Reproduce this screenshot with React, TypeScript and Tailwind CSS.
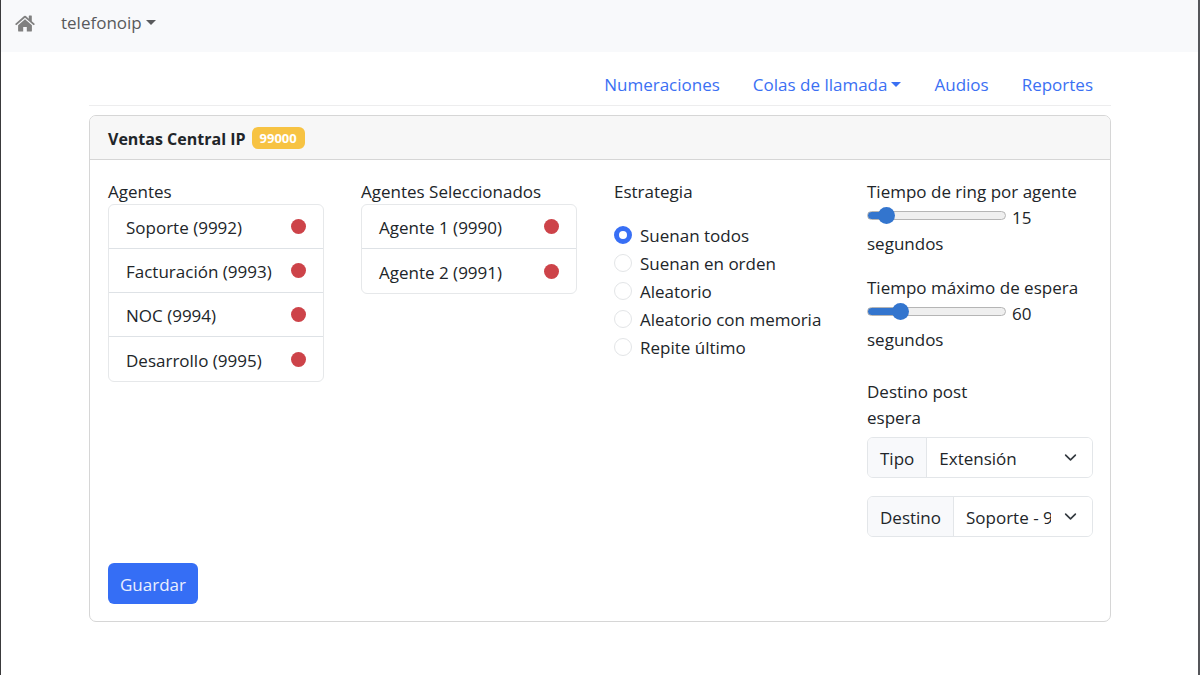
import { useState } from 'react';

type Agent = { name: string; ext: number };

const available: Agent[] = [
  { name: 'Soporte', ext: 9992 },
  { name: 'Facturación', ext: 9993 },
  { name: 'NOC', ext: 9994 },
  { name: 'Desarrollo', ext: 9995 },
];

const selected: Agent[] = [
  { name: 'Agente 1', ext: 9990 },
  { name: 'Agente 2', ext: 9991 },
];

const strategies = ['Suenan todos', 'Suenan en orden', 'Aleatorio', 'Aleatorio con memoria', 'Repite último'];

function Caret() {
  return (
    <svg viewBox="0 0 10 5" className="mb-[2px] h-[5px] w-[10px] fill-current" aria-hidden="true">
      <path d="M0 0h10L5 5z" />
    </svg>
  );
}

function HomeIcon() {
  return (
    <svg viewBox="0 0 20 17" className="h-[17px] w-[20px]" fill="#808080" aria-hidden="true">
      <path d="M9.1 1.1a1.35 1.35 0 0 1 1.8 0l2.9 2.6V1.1c0-.3.2-.5.5-.5h2c.3 0 .5.2.5.5v5.2l2.8 2.5c.2.2.2.5 0 .7l-.5.5c-.2.2-.5.2-.7 0L10 2.7 1.6 10c-.2.2-.5.2-.7 0l-.5-.5c-.2-.2-.2-.5 0-.7z" />
      <path d="M10 4.3l6.9 6v5.4c0 .5-.4.9-.9.9h-4.2v-4.7H8.2v4.7H4c-.5 0-.9-.4-.9-.9v-5.4z" />
    </svg>
  );
}

function AgentList({ title, agents }: { title: string; agents: Agent[] }) {
  return (
    <section className="mr-[10px]">
      <h2 className="leading-[25px]">{title}</h2>
      <ul className="divide-y divide-[#dee2e6] rounded-md border border-[#e6e8ea]">
        {agents.map((agent) => (
          <li key={agent.ext} className="flex h-[44px] items-center justify-between px-[17px]">
            <span className="pt-[3px]">
              {agent.name} ({agent.ext})
            </span>
            <span className="size-[15px] rounded-full bg-[#cd4349]" />
          </li>
        ))}
      </ul>
    </section>
  );
}

type TimeSliderProps = { id: string; label: string; min: number; max: number; initial: number };

function TimeSlider({ id, label, min, max, initial }: TimeSliderProps) {
  const [value, setValue] = useState(initial);
  const fill = `${((value - min) / (max - min)) * 88 + 6}%`;
  return (
    <div>
      <label htmlFor={id} className="block whitespace-nowrap">
        {label}
      </label>
      <div className="flex items-start gap-[6px]">
        <input
          id={id}
          type="range"
          min={min}
          max={max}
          value={value}
          onChange={(e) => setValue(Number(e.target.value))}
          style={{ backgroundImage: `linear-gradient(to right, #3375ce ${fill}, #efefef ${fill})` }}
          className="mt-[6px] h-[9px] w-[139px] appearance-none rounded-full border border-[#b5b5b5] bg-origin-border [&::-webkit-slider-thumb]:size-[17px] [&::-webkit-slider-thumb]:appearance-none [&::-webkit-slider-thumb]:rounded-full [&::-webkit-slider-thumb]:bg-[#3375ce]"
        />
        <output htmlFor={id}>{value}</output>
      </div>
      <p>segundos</p>
    </div>
  );
}

function SelectGroup({ id, label, options }: { id: string; label: string; options: string[] }) {
  return (
    <div className="flex h-[41px] overflow-hidden rounded-md border border-[#e3e6e9]">
      <label htmlFor={id} className="flex items-center border-r border-[#e3e6e9] bg-[#f8f9fb] px-[12px] pt-[3px]">
        {label}
      </label>
      <div className="relative min-w-0 flex-1">
        <select id={id} className="h-full w-full appearance-none bg-white pt-[3px] pr-[41px] pl-[12px] outline-none">
          {options.map((option) => (
            <option key={option}>{option}</option>
          ))}
        </select>
        <svg
          viewBox="0 0 16 16"
          className="pointer-events-none absolute top-[13px] right-[15px] size-[13px]"
          fill="none"
          stroke="#343a40"
          strokeWidth="2"
          strokeLinecap="round"
          strokeLinejoin="round"
          aria-hidden="true"
        >
          <path d="m2 5 6 6 6-6" />
        </svg>
      </div>
    </div>
  );
}

export default function App() {
  const [strategy, setStrategy] = useState(strategies[0]);

  return (
    <div className="min-h-screen border-r-2 border-l border-r-[#55565a] border-l-[#3a3a3c] bg-white font-['Open_Sans','Noto_Sans',sans-serif] text-[17px] leading-[26px] text-[#212529]">
      <nav className="flex h-[52px] items-center gap-[26px] bg-[#f8f9fb] px-[14px] pb-[6px]">
        <a href="#inicio" aria-label="Inicio">
          <HomeIcon />
        </a>
        <button type="button" className="flex items-center gap-[4px] text-[#595a5c]">
          telefonoip <Caret />
        </button>
      </nav>

      <main className="pr-[87px] pl-[88px]">
        <nav className="flex h-[54px] items-center justify-end gap-[33px] border-b border-[#ededee] pt-[13px] pr-[18px] text-[#3b70f3]">
          <a href="#numeraciones">Numeraciones</a>
          <button type="button" className="flex items-center gap-[4px]">
            Colas de llamada <Caret />
          </button>
          <a href="#audios">Audios</a>
          <a href="#reportes">Reportes</a>
        </nav>

        <form className="mt-[9px] rounded-[7px] border border-[#d6d6d6]" onSubmit={(e) => e.preventDefault()}>
          <header className="flex h-[44px] items-center gap-[6px] rounded-t-md border-b border-[#d6d6d6] bg-[#f7f7f7] px-[18px]">
            <h1 className="pt-[3px] text-[16px] font-bold">Ventas Central IP</h1>
            <span className="rounded-md bg-[#f7c343] px-[8px] text-[13px] leading-[22px] font-bold text-white">99000</span>
          </header>

          <div className="pt-[19px] pr-[17px] pb-[17px] pl-[18px]">
            <div className="grid grid-cols-4 gap-[27px]">
              <AgentList title="Agentes" agents={available} />
              <AgentList title="Agentes Seleccionados" agents={selected} />

              <fieldset>
                <legend>Estrategia</legend>
                <div className="mt-[16px] flex flex-col">
                  {strategies.map((name) => (
                    <label key={name} className="flex h-[28px] items-center gap-[8px] whitespace-nowrap">
                      <input
                        type="radio"
                        name="estrategia"
                        checked={strategy === name}
                        onChange={() => setStrategy(name)}
                        className="size-[18px] shrink-0 appearance-none rounded-full border border-[#e3e5e7] bg-white checked:border-[5px] checked:border-[#386ff5]"
                      />
                      <span className="pt-[2px]">{name}</span>
                    </label>
                  ))}
                </div>
              </fieldset>

              <section>
                <div className="flex flex-col gap-[18px]">
                  <TimeSlider id="ring" label="Tiempo de ring por agente" min={5} max={120} initial={15} />
                  <TimeSlider id="espera" label="Tiempo máximo de espera" min={0} max={300} initial={60} />
                </div>
                <h2 className="mt-[26px] mb-[6px] w-1/2">Destino post espera</h2>
                <div className="flex flex-col gap-[18px]">
                  <SelectGroup id="tipo" label="Tipo" options={['Extensión', 'Cola', 'Audio']} />
                  <SelectGroup id="destino" label="Destino" options={['Soporte - 9992', 'Facturación - 9993', 'NOC - 9994']} />
                </div>
              </section>
            </div>

            <button type="submit" className="mt-[26px] h-[41px] rounded-md bg-[#356ef5] px-[12px] pt-[2px] text-[#e9effe]">
              Guardar
            </button>
          </div>
        </form>
      </main>
    </div>
  );
}
